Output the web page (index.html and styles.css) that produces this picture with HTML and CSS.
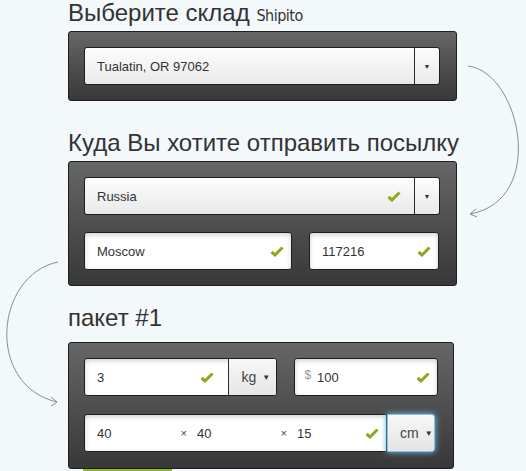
FILE: index.html
```html
<!DOCTYPE html>
<html lang="ru">
<head>
    <meta charset="UTF-8">
    <title>Shipito</title>
    <link rel="stylesheet" href="styles.css">
</head>
<body>
    <div class="page">
        <h2 class="title first">Выберите склад <span class="logo">Shipito</span></h2>
        <div class="panel">
            <div class="select">
                <span class="value">Tualatin, OR 97062</span>
                <span class="caret">▼</span>
            </div>
        </div>

        <h2 class="title">Куда Вы хотите отправить посылку</h2>
        <div class="panel">
            <div class="select">
                <span class="value">Russia</span>
                <svg class="check" viewBox="0 0 14 11"><path d="M1.5 6 L5 9 L12.5 1.5"/></svg>
                <span class="caret">▼</span>
            </div>
            <div class="row">
                <div class="field city">
                    <span class="value">Moscow</span>
                    <svg class="check" viewBox="0 0 14 11"><path d="M1.5 6 L5 9 L12.5 1.5"/></svg>
                </div>
                <div class="field zip">
                    <span class="value">117216</span>
                    <svg class="check" viewBox="0 0 14 11"><path d="M1.5 6 L5 9 L12.5 1.5"/></svg>
                </div>
            </div>
        </div>

        <h2 class="title small">пакет #1</h2>
        <div class="panel narrow">
            <div class="row top">
                <div class="field weight">
                    <span class="value">3</span>
                    <svg class="check" viewBox="0 0 14 11"><path d="M1.5 6 L5 9 L12.5 1.5"/></svg>
                    <span class="unit">kg <i>▼</i></span>
                </div>
                <div class="field price">
                    <span class="dollar">$</span>
                    <span class="value">100</span>
                    <svg class="check" viewBox="0 0 14 11"><path d="M1.5 6 L5 9 L12.5 1.5"/></svg>
                </div>
            </div>
            <div class="row">
                <div class="field dims">
                    <span class="dim">40</span>
                    <span class="times">×</span>
                    <span class="dim">40</span>
                    <span class="times">×</span>
                    <span class="dim last">15</span>
                    <svg class="check" viewBox="0 0 14 11"><path d="M1.5 6 L5 9 L12.5 1.5"/></svg>
                </div>
                <div class="unit-btn">cm <i>▼</i></div>
            </div>
        </div>
        <div class="next-btn"></div>
    </div>

    <!-- стрелки между блоками -->
    <svg class="arrows" width="526" height="471" viewBox="0 0 526 471">
        <path d="M468 66 C520 72 548 200 470 214"/>
        <path d="M476 209 L470 214 L477 217"/>
        <path d="M58 262 C-5 275 -15 385 57 402"/>
        <path d="M51 397 L57 402 L51 406"/>
    </svg>
</body>
</html>
```

FILE: styles.css
```css
* {
    margin: 0;
    padding: 0;
    box-sizing: border-box;
}

body {
    background: #f3f8fb;
    font-family: "Liberation Sans", Arial, sans-serif;
    color: #333;
    width: 526px;
    height: 471px;
    overflow: hidden;
    position: relative;
}

.page {
    padding-left: 68px;
}

.title {
    font-weight: normal;
    font-size: 24px;
    line-height: 24px;
    height: 24px;
    color: #333;
    margin-top: 30px;
    margin-bottom: 6px;
    white-space: nowrap;
}

.title.first {
    margin-top: 1px;
}

.title.small {
    margin-top: 20px;
    margin-bottom: 12px;
}

.logo {
    font-family: "DejaVu Sans Condensed", "DejaVu Sans", sans-serif;
    font-size: 16px;
    line-height: 16px;
    letter-spacing: -0.5px;
}

.panel {
    width: 389px;
    padding: 15px 15px;
    background: linear-gradient(#666, #383838);
    border: 1px solid #1e1e1e;
    border-radius: 3px;
    display: flex;
    flex-direction: column;
    gap: 17px;
}

.panel.narrow {
    width: 386px;
    padding-bottom: 16px;
}

.panel.narrow .row.top {
    margin-bottom: 1px;
}

.select {
    height: 38px;
    display: flex;
    align-items: center;
    background: linear-gradient(#fdfdfd, #e9e9e9);
    border: 1px solid #1e1e1e;
    border-radius: 3px;
    font-size: 13px;
    width: 356px;
}

.select .value {
    flex: 1;
    padding-left: 12px;
}

.select .check {
    margin-right: 13px;
}

.caret {
    width: 25px;
    height: 100%;
    border-left: 1px solid #2a2a2a;
    font-size: 7px;
    display: flex;
    align-items: center;
    justify-content: center;
    color: #333;
}

.row {
    display: flex;
    gap: 17px;
}

.field {
    height: 38px;
    display: flex;
    align-items: center;
    background: #fff;
    border: 1px solid #1e1e1e;
    border-radius: 3px;
    box-shadow: inset 0 2px 5px rgba(0, 0, 0, 0.18);
    font-size: 13px;
    overflow: hidden;
}

.field .value {
    flex: 1;
    padding-left: 12px;
}

.field .check {
    margin-right: 7px;
}

.check {
    width: 14px;
    height: 11px;
    fill: none;
    stroke: #8aa91c;
    stroke-width: 3;
    flex-shrink: 0;
}

.city {
    width: 208px;
}

.zip {
    width: 130px;
}

.weight {
    width: 194px;
}

.unit {
    width: 48px;
    height: 100%;
    display: flex;
    align-items: center;
    padding-left: 12px;
    border-left: 1px solid #2a2a2a;
    background: linear-gradient(#f7f7f7, #e6e6e6);
    margin-left: 7px;
    font-size: 14px;
    color: #444;
}

.unit i,
.unit-btn i {
    font-style: normal;
    font-size: 8px;
    margin-left: 6px;
    color: #333;
}

.price {
    width: 144px;
}

.price .dollar {
    color: #999;
    font-size: 12px;
    padding-left: 9px;
    align-self: flex-start;
    margin-top: 9px;
}

.price .value {
    padding-left: 6px;
}

.dims {
    width: 303px;
    border-radius: 3px 0 0 3px;
    padding-left: 12px;
}

.dim {
    width: 86px;
}

.dim.last {
    width: 70px;
}

.times {
    font-size: 11px;
    width: 17px;
    color: #444;
}

.unit-btn {
    width: 48px;
    height: 38px;
    display: flex;
    align-items: center;
    padding-left: 12px;
    background: linear-gradient(#f8f8f8, #e4e4e4);
    border: 1px solid #7fc6ea;
    border-radius: 0 3px 3px 0;
    box-shadow: 0 0 6px #6cc4f0;
    font-size: 14px;
    color: #444;
    margin-left: -17px;
}

.next-btn {
    width: 89px;
    height: 10px;
    margin-left: 15px;
    background: #8cb52a;
}

.arrows {
    position: absolute;
    left: 0;
    top: 0;
    fill: none;
    stroke: #8a8e92;
    stroke-width: 1;
}
```
